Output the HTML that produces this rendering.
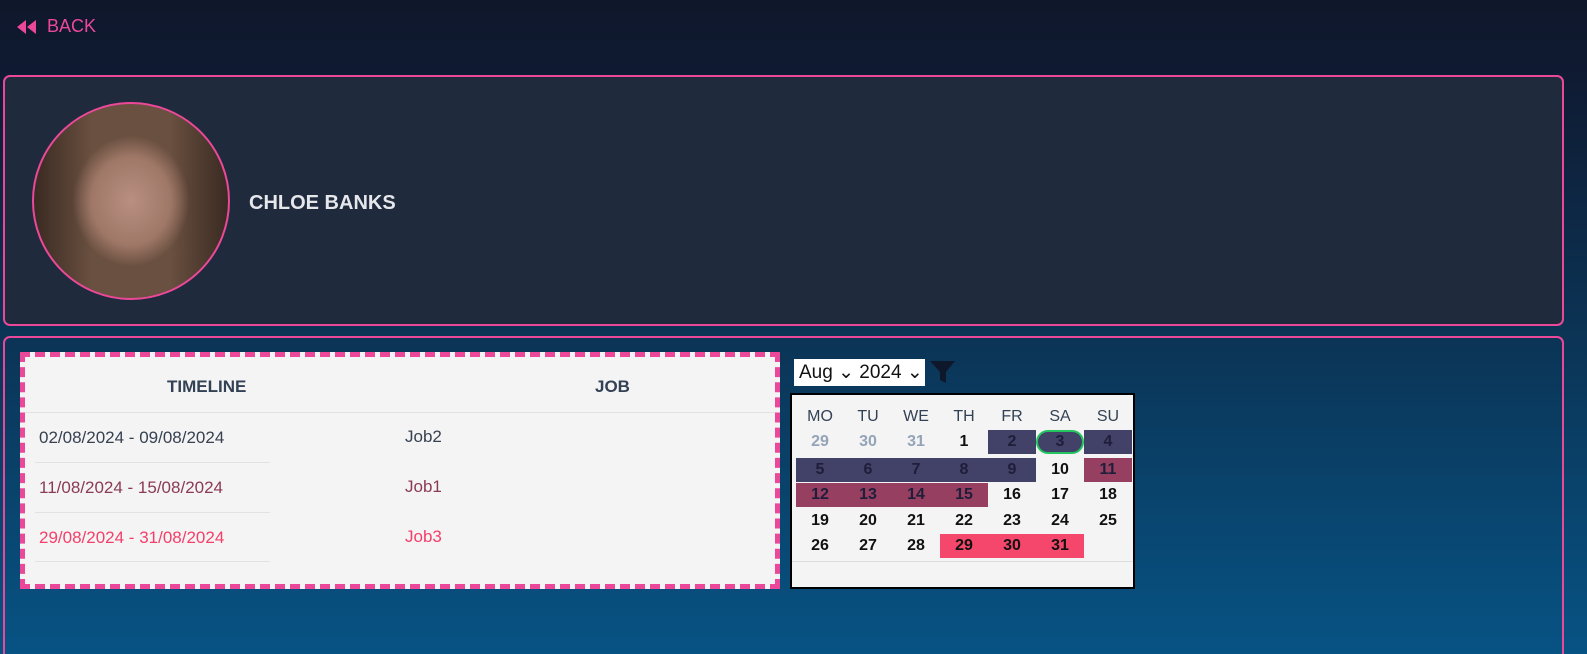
<!DOCTYPE html>
<html style="overflow:hidden;width:1587px;height:654px"><head><style>
*{margin:0;padding:0;box-sizing:border-box}
html,body{overflow:hidden}
body{width:1587px;height:654px;font-family:"Liberation Sans",sans-serif;background:linear-gradient(180deg,#0f172a 0px,#0f1b33 80px,#0b3557 350px,#075384 654px);position:relative}
.back{position:absolute;left:17px;top:16px;color:#ec4899;font-size:18px;display:flex;align-items:center;gap:8px}
.p1{position:absolute;left:3px;top:75px;width:1561px;height:251px;border:2px solid #ec4899;border-radius:7px;background:#1f2a3d}
.av{position:absolute;left:27px;top:25px;width:198px;height:198px;border-radius:50%;border:2px solid #ec4899;background:radial-gradient(ellipse 40% 45% at 50% 50%,#b88f80 0,#a07868 50%,transparent 75%),linear-gradient(90deg,#3a2a22,#6a5040 30%,#6a5040 70%,#3a2a22);overflow:hidden}
.name{position:absolute;left:244px;top:115px;color:#e5e7eb;font-size:20px;font-weight:bold}
.p2{position:absolute;left:3px;top:336px;width:1561px;height:330px;border:2px solid #ec4899;border-radius:7px}
.tbl{position:absolute;left:20px;top:352px;width:760px;height:237px;border:5px dashed #ec4899;background:#f4f4f4}
.th{position:absolute;top:20px;font-weight:bold;color:#334155;font-size:17px}
.row{position:absolute;left:10px;width:235px;height:50px;border-top:1px solid #e2e2e2;font-size:17px;line-height:50px;padding-left:4px}
.job{position:absolute;left:380px;font-size:17px;line-height:50px}
.sel{position:absolute;left:794px;top:359px;width:131px;height:27px;background:#fff;font-size:19px;line-height:27px;padding-left:5px;color:#111}
.cal{position:absolute;left:790px;top:393px;width:345px;height:196px;border:2px solid #000;background:#f4f4f4}
.c{position:absolute;width:48px;height:24px;text-align:center;font-size:16px;line-height:24px;color:#111;font-weight:bold}
</style></head><body>
<div class="back"><svg width="22" height="16" viewBox="0 0 22 16"><path d="M0 8L9 1V15Z M10 8L19 1V15Z" fill="#ec4899"/></svg>BACK</div>
<div class="p1"><div class="av"></div><div class="name">CHLOE BANKS</div></div>
<div class="p2"></div>
<div class="tbl">
<div class="th" style="left:142px">TIMELINE</div>
<div class="th" style="left:570px">JOB</div>
<div style="position:absolute;left:0;right:0;top:55px;border-top:1px solid #e2e2e2"></div>
<div class="row" style="top:55px;color:#374151">02/08/2024 - 09/08/2024</div><div class="job" style="top:55px;color:#374151">Job2</div>
<div class="row" style="top:105px;color:#8b3a55">11/08/2024 - 15/08/2024</div><div class="job" style="top:105px;color:#8b3a55">Job1</div>
<div class="row" style="top:155px;color:#f43f6a;border-bottom:1px solid #e2e2e2">29/08/2024 - 31/08/2024</div><div class="job" style="top:155px;color:#f43f6a">Job3</div>
</div>
<div class="sel">Aug &#8964; 2024 &#8964;</div>
<svg style="position:absolute;left:930px;top:360px" width="26" height="24" viewBox="0 0 26 24"><path d="M0 1H25L16 12V23L10 20V12Z" fill="#0f172a"/></svg>
<div class="cal" id="cal"></div>
<script>
var cal=document.getElementById('cal'),h='';
var hd=['MO','TU','WE','TH','FR','SA','SU'];
hd.forEach(function(d,i){h+='<div class="c" style="left:'+(4+i*48)+'px;top:10px;color:#334155;font-weight:normal">'+d+'</div>'});
var days=[29,30,31];for(var i=1;i<=31;i++)days.push(i);
var tops=[35,63,88,114,139];
days.forEach(function(d,k){var r=Math.floor(k/7),c=k%7;var bg='',col='#111';
if(k<3)col='#94a3b8';
else if(r==0&&c>=4||r==1&&d<=9)bg='#424167';
else if(d>=11&&d<=15&&k<20)bg='#963f60';
else if(d>=29&&k>30)bg='#f4476b';
if(bg&&bg!='#f4476b')col='#1e1e3a';
var ex='';if(k==5){ex='border:2px solid #22c55e;border-radius:12px;line-height:20px;';}
h+='<div class="c" style="left:'+(4+c*48)+'px;top:'+tops[r]+'px;background:'+bg+';color:'+col+';'+ex+'">'+d+'</div>'});
h+='<div style="position:absolute;left:0;right:0;top:166px;border-top:1px solid #ddd"></div>';
cal.innerHTML=h;
</script>
</body></html>
